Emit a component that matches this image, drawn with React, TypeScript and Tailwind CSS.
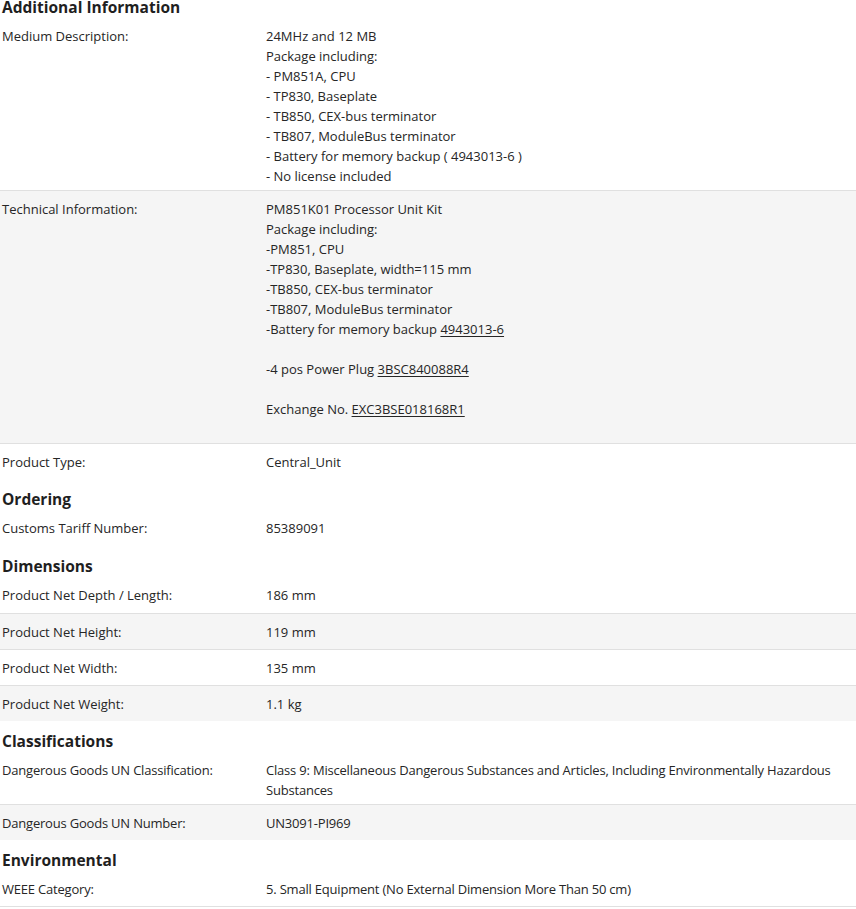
import React from "react";

type Row = { label: string; value: React.ReactNode };
type Section = { title: string; tight?: boolean; rows: Row[] };

const Link = ({ children }: { children: React.ReactNode }) => (
  <a href="#" className="underline underline-offset-2 text-[#262626]">
    {children}
  </a>
);

const sections: Section[] = [
  {
    title: "Additional Information",
    rows: [
      {
        label: "Medium Description:",
        value: (
          <>
            24MHz and 12 MB
            <br />
            Package including:
            <br />- PM851A, CPU
            <br />- TP830, Baseplate
            <br />- TB850, CEX-bus terminator
            <br />- TB807, ModuleBus terminator
            <br />- Battery for memory backup ( 4943013-6 )
            <br />- No license included
          </>
        ),
      },
      {
        label: "Technical Information:",
        value: (
          <>
            PM851K01 Processor Unit Kit
            <br />
            Package including:
            <br />
            -PM851, CPU
            <br />
            -TP830, Baseplate, width=115 mm
            <br />
            -TB850, CEX-bus terminator
            <br />
            -TB807, ModuleBus terminator
            <br />
            -Battery for memory backup <Link>4943013-6</Link>
            <br />
            <br />
            -4 pos Power Plug <Link>3BSC840088R4</Link>
            <br />
            <br />
            Exchange No. <Link>EXC3BSE018168R1</Link>
            <br />
            <br />
          </>
        ),
      },
      { label: "Product Type:", value: "Central_Unit" },
    ],
  },
  {
    title: "Ordering",
    rows: [{ label: "Customs Tariff Number:", value: "85389091" }],
  },
  {
    title: "Dimensions",
    rows: [
      { label: "Product Net Depth / Length:", value: "186 mm" },
      { label: "Product Net Height:", value: "119 mm" },
      { label: "Product Net Width:", value: "135 mm" },
      { label: "Product Net Weight:", value: "1.1 kg" },
    ],
  },
  {
    title: "Classifications",
    tight: true,
    rows: [
      {
        label: "Dangerous Goods UN Classification:",
        value:
          "Class 9: Miscellaneous Dangerous Substances and Articles, Including Environmentally Hazardous Substances",
      },
      { label: "Dangerous Goods UN Number:", value: "UN3091-PI969" },
    ],
  },
  {
    title: "Environmental",
    tight: true,
    rows: [
      {
        label: "WEEE Category:",
        value: "5. Small Equipment (No External Dimension More Than 50 cm)",
      },
    ],
  },
];

function App() {
  return (
    <div className="w-full min-h-screen bg-white overflow-hidden font-['Open_Sans',sans-serif] text-[#262626]">
      <div className="-mt-[13px]">
        {sections.map((section, si) => (
          <div key={section.title}>
            <h3 className="pl-[2px] pt-[9px] text-[15.5px] leading-[22px] font-bold text-[#1f1f1f]">
              {section.title}
            </h3>
            {section.rows.map((row, ri) => (
              <div
                key={row.label}
                className={
                  "grid grid-cols-[266px_1fr] min-h-[36px] pt-2 pb-1 text-[13px] leading-5 " +
                  (section.tight ? "tracking-[-0.2px] " : "") +
                  (ri % 2 === 1 ? "bg-[#f5f5f5] " : "bg-white ") +
                  (ri > 0 ? "border-t border-[#e0e0e0] " : "") +
                  (si === sections.length - 1 && ri === section.rows.length - 1
                    ? "border-b border-[#e0e0e0]"
                    : "")
                }
              >
                <div className="pl-[2px]">{row.label}</div>
                <div>{row.value}</div>
              </div>
            ))}
          </div>
        ))}
      </div>
    </div>
  );
}

export default App;
